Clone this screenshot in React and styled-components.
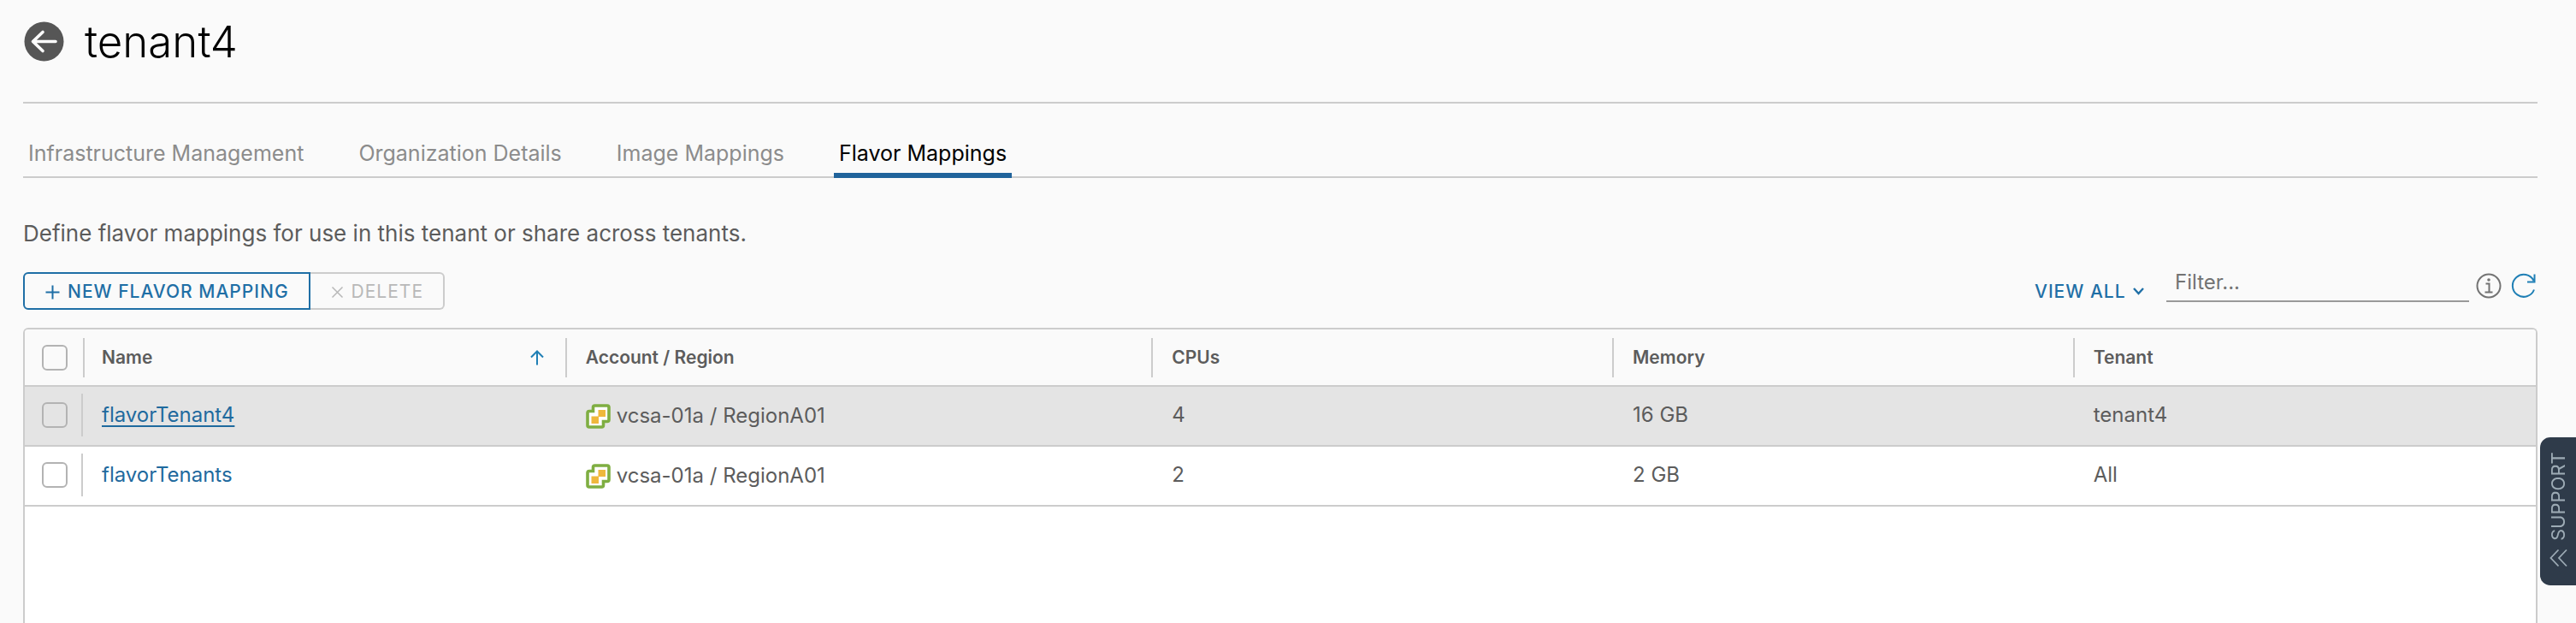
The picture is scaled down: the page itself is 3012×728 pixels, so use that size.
import React, { useState } from "react";
import styled, { createGlobalStyle, css } from "styled-components";

const GlobalStyle = createGlobalStyle`
  *, *::before, *::after { box-sizing: border-box; }
  body {
    margin: 0;
    background: #fafafa;
    color: #5c5c5c;
    font-family: Inter, "Open Sans", sans-serif;
    font-size: 26px;
    line-height: 46px;
  }
  button, input, select { font: inherit; color: inherit; margin: 0; }
`;

const Page = styled.main`
  display: flex;
  flex-direction: column;
  min-height: 100vh;
  padding: 0 45px 0 27px;
`;

const Header = styled.header`
  display: flex;
  align-items: center;
  gap: 24px;
  height: 121px;
  padding: 0 0 22px 1px;
  border-bottom: 2px solid #cccccc;
`;

const BackButton = styled.button`
  display: flex;
  padding: 0;
  border: 0;
  background: none;
  cursor: pointer;
`;

const Title = styled.h1`
  margin: 0;
  color: #000000;
  font-size: 51px;
  font-weight: 300;
  line-height: 60px;
`;

const Tabs = styled.nav`
  display: flex;
  gap: 52px;
  height: 87px;
  padding-top: 34px;
  border-bottom: 2px solid #cccccc;
`;

const Tab = styled.a`
  height: 53px;
  padding: 0 6px;
  color: #8c8c8c;
  font-size: 25px;
  line-height: 48px;
  text-decoration: none;
  ${({ $active }) =>
    $active &&
    css`
      color: #000000;
      border-bottom: 6px solid #20639b;
    `}
`;

const Description = styled.p`
  margin: 42px 0 22px;
`;

const Toolbar = styled.div`
  display: flex;
  justify-content: space-between;
  height: 65px;
`;

const ButtonGroup = styled.div`
  display: flex;
  height: 44px;
`;

const ActionButton = styled.button`
  display: flex;
  align-items: center;
  gap: 9px;
  padding: 2px 23px 0 24px;
  border: 2px solid #1f6fa6;
  border-radius: 6px 0 0 6px;
  background: transparent;
  color: #1f6fa6;
  font-size: 21px;
  font-weight: 500;
  letter-spacing: 1px;
  line-height: 38px;
  white-space: nowrap;

  &:disabled {
    border-color: #cccccc;
    border-left: 0;
    border-radius: 0 6px 6px 0;
    color: #b8b8b8;
    font-weight: 400;
  }
`;

const Filters = styled.div`
  display: flex;
  align-items: flex-start;
`;

const ViewPicker = styled.label`
  display: flex;
  align-items: center;
  gap: 8px;
  height: 44px;
  margin-right: 26px;
  color: #1f6fa6;
`;

const ViewSelect = styled.select`
  appearance: none;
  padding: 2px 0 0;
  border: 0;
  background: transparent;
  font-size: 21px;
  font-weight: 500;
  letter-spacing: 1px;
`;

const FilterInput = styled.input`
  width: 354px;
  height: 35px;
  margin-right: 8px;
  padding: 0 10px 11px;
  border: 0;
  border-bottom: 2px solid #999999;
  background: transparent;
  font-size: 24px;
  line-height: 24px;

  &::placeholder { color: #737373; opacity: 1; }
`;

const IconButton = styled.button`
  display: flex;
  margin: 1px 1px 0 0;
  padding: 0;
  border: 0;
  background: none;
  color: ${({ $accent }) => ($accent ? "#1f7fb5" : "#737373")};

  & + & { margin-left: 10px; }
`;

const GridFrame = styled.section`
  flex: 1;
  border: 2px solid #cccccc;
  border-bottom: 0;
  border-radius: 6px 6px 0 0;
  background: #ffffff;
  overflow: hidden;
`;

const Grid = styled.table`
  width: 100%;
  border-collapse: separate;
  border-spacing: 0;
  table-layout: fixed;
`;

const Col = styled.col`
  width: ${({ $width }) => $width};
`;

const cellPadding = css`
  padding: 0 27px 0 22px;

  &:nth-child(-n + 2) { padding-left: 20px; }
`;

const HeadCell = styled.th`
  position: relative;
  height: 67px;
  ${cellPadding}
  border-bottom: 2px solid #cccccc;
  background: #fafafa;
  font-size: 21px;
  font-weight: 600;
  line-height: 24px;
  text-align: left;

  &:not(:last-child)::after {
    content: "";
    position: absolute;
    top: 10px;
    right: 0;
    width: 2px;
    height: 46px;
    background: #cccccc;
  }
`;

const HeadContent = styled.div`
  display: flex;
  align-items: center;
  justify-content: space-between;
`;

const SortIcon = styled.svg`
  color: #1f7fb5;
`;

const Row = styled.tr`
  background: ${({ $hovered }) => ($hovered ? "#e4e4e4" : "#ffffff")};
`;

const Cell = styled.td`
  height: 70px;
  ${cellPadding}
  padding-bottom: 2px;
  border-bottom: 2px solid #cccccc;
  font-size: 24px;
  line-height: 30px;
`;

const CheckSlot = styled.div`
  display: flex;
  align-items: center;
  height: 50px;
  margin-right: -25px;
  border-right: ${({ $ruled }) => ($ruled ? "2px solid #cccccc" : "0")};
`;

const Checkbox = styled.input`
  appearance: none;
  width: 30px;
  height: 30px;
  border: 2px solid #b3b3b3;
  border-radius: 6px;
  background: transparent;

  &:checked { background: #1f6fa6; border-color: #1f6fa6; }
`;

const NameLink = styled.a`
  color: #1f6a9e;
  text-decoration: ${({ $underlined }) => ($underlined ? "underline" : "none")};
  text-decoration-thickness: 2px;
  text-underline-offset: 4px;
`;

const Account = styled.span`
  display: flex;
  align-items: center;
  gap: 7px;
  padding-top: 2px;
`;

const SupportTab = styled.button`
  position: fixed;
  top: 511px;
  right: 0;
  display: flex;
  align-items: center;
  gap: 9px;
  width: 42px;
  height: 173px;
  padding: 21px 0 0;
  border: 0;
  border-radius: 0 12px 12px 0;
  background: #2f3b4a;
  color: #9dabb5;
  font-size: 22px;
  line-height: 42px;
  writing-mode: vertical-rl;
  transform: rotate(180deg);

  svg { flex: none; }
`;

const Icon = ({ size, width, height, box = "0 0 24 24", stroke = 2, children }) => (
  <svg
    width={width || size}
    height={height || size}
    viewBox={box}
    fill="none"
    stroke="currentColor"
    strokeWidth={stroke}
    aria-hidden="true"
  >
    {children}
  </svg>
);

const BackIcon = () => (
  <svg width="47" height="47" viewBox="0 0 47 47" aria-hidden="true">
    <circle cx="23.5" cy="23.5" r="23" fill="#565656" />
    <path
      d="M37 23.500H11M22 12.500 10.500 23.500 22 34.500"
      fill="none"
      stroke="#ffffff"
      strokeWidth="3.600"
      strokeLinecap="round"
      strokeLinejoin="round"
    />
  </svg>
);

const AccountIcon = () => (
  <svg width="29" height="29" viewBox="0 0 29 29" aria-hidden="true">
    <path
      d="M10.500 2H25Q27 2 27 4V18.500Q27 20.500 25 20.500H20.500V25Q20.500 27 18.500 27H4Q2 27 2 25V10.500Q2 8.500 4 8.500H8.500V4Q8.500 2 10.500 2Z"
      fill="#ffffff"
      stroke="#7fae42"
      strokeWidth="3.600"
    />
    <path d="M14.500 7H23V15H14.500ZM6.500 14.500H15V23H6.500Z" fill="#efb83c" />
  </svg>
);

const rows = [
  { name: "flavorTenant4", account: "vcsa-01a / RegionA01", cpus: "4", memory: "16 GB", tenant: "tenant4" },
  { name: "flavorTenants", account: "vcsa-01a / RegionA01", cpus: "2", memory: "2 GB", tenant: "All" },
];

const tabs = ["Infrastructure Management", "Organization Details", "Image Mappings", "Flavor Mappings"];

export default function App() {
  const [filter, setFilter] = useState("");
  return (
    <>
      <GlobalStyle />
      <Page>
        <Header>
          <BackButton aria-label="Back">
            <BackIcon />
          </BackButton>
          <Title>tenant4</Title>
        </Header>

        <Tabs>
          {tabs.map((tab) => (
            <Tab key={tab} href="#" $active={tab === "Flavor Mappings"}>
              {tab}
            </Tab>
          ))}
        </Tabs>

        <Description>Define flavor mappings for use in this tenant or share across tenants.</Description>

        <Toolbar>
          <ButtonGroup>
            <ActionButton>
              <Icon size={17} box="0 0 17 17">
                <path d="M8.500 0.500V16.500M0.500 8.500H16.500" />
              </Icon>
              NEW FLAVOR MAPPING
            </ActionButton>
            <ActionButton disabled>
              <Icon size={15} box="0 0 15 15" stroke={1.5}>
                <path d="M1.500 1.500 13.500 13.500M13.500 1.500 1.500 13.500" />
              </Icon>
              DELETE
            </ActionButton>
          </ButtonGroup>

          <Filters>
            <ViewPicker>
              <ViewSelect aria-label="View">
                <option>VIEW ALL</option>
              </ViewSelect>
              <Icon width={13} height={9} box="0 0 13 9" stroke={2.4}>
                <path d="M1 1 6.500 7 12 1" />
              </Icon>
            </ViewPicker>
            <FilterInput
              aria-label="Filter"
              placeholder="Filter..."
              value={filter}
              onChange={(event) => setFilter(event.target.value)}
            />
            <IconButton aria-label="Filter help">
              <Icon size={30} box="0 0 30 30">
                <circle cx="15" cy="15" r="13.500" />
                <circle cx="15" cy="8" r="1.800" fill="currentColor" stroke="none" />
                <path d="M11.500 12.500H15.500V22M10.500 22.500H19.500" />
              </Icon>
            </IconButton>
            <IconButton aria-label="Refresh" $accent>
              <Icon size={30} box="0 0 30 30">
                <path d="M27 19.500A13 13 0 1 1 26.500 9M27.500 1.500V10.500H19" />
              </Icon>
            </IconButton>
          </Filters>
        </Toolbar>

        <GridFrame>
          <Grid>
            <colgroup>
              <Col $width="70px" />
              <Col $width="19.2%" />
              <Col $width="23.35%" />
              <Col $width="18.35%" />
              <Col $width="18.35%" />
              <Col $width="auto" />
            </colgroup>
            <thead>
              <tr>
                <HeadCell>
                  <CheckSlot>
                    <Checkbox type="checkbox" aria-label="Select all" />
                  </CheckSlot>
                </HeadCell>
                <HeadCell>
                  <HeadContent>
                    Name
                    <SortIcon width="16" height="18" viewBox="0 0 16 18" fill="none" aria-hidden="true">
                      <path d="M8 17.500V2M1 8.500 8 1.500 15 8.500" stroke="currentColor" strokeWidth="2" />
                    </SortIcon>
                  </HeadContent>
                </HeadCell>
                <HeadCell>Account / Region</HeadCell>
                <HeadCell>CPUs</HeadCell>
                <HeadCell>Memory</HeadCell>
                <HeadCell>Tenant</HeadCell>
              </tr>
            </thead>
            <tbody>
              {rows.map((row, index) => (
                <Row key={row.name} $hovered={index === 0}>
                  <Cell>
                    <CheckSlot $ruled>
                      <Checkbox type="checkbox" aria-label={`Select ${row.name}`} />
                    </CheckSlot>
                  </Cell>
                  <Cell>
                    <NameLink href="#" $underlined={index === 0}>
                      {row.name}
                    </NameLink>
                  </Cell>
                  <Cell>
                    <Account>
                      <AccountIcon />
                      {row.account}
                    </Account>
                  </Cell>
                  <Cell>{row.cpus}</Cell>
                  <Cell>{row.memory}</Cell>
                  <Cell>{row.tenant}</Cell>
                </Row>
              ))}
            </tbody>
          </Grid>
        </GridFrame>
      </Page>

      <SupportTab>
        <Icon width={22} height={22} box="0 0 22 22" stroke={1.8}>
          <path d="M1 1.500 10 11 1 20.500M10.500 1.500 19.500 11 10.500 20.500" />
        </Icon>
        SUPPORT
      </SupportTab>
    </>
  );
}
